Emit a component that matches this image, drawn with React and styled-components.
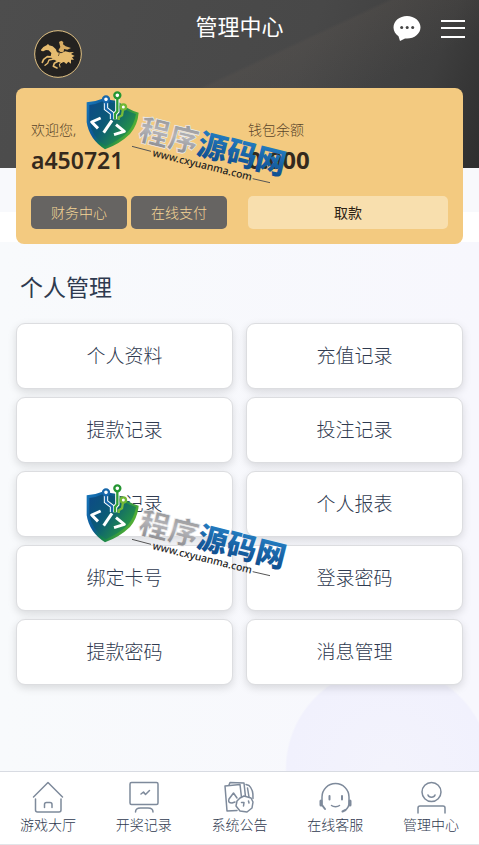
import styled, { createGlobalStyle } from 'styled-components';

// the two columns of shortcuts under the wallet card
const tiles = [
  '个人资料', '充值记录',
  '提款记录', '投注记录',
  '账变记录', '个人报表',
  '绑定卡号', '登录密码',
  '提款密码', '消息管理',
];

const tabs = [
  { label: '游戏大厅', icon: <HomeIcon /> },
  { label: '开奖记录', icon: <BoardIcon /> },
  { label: '系统公告', icon: <CardsIcon /> },
  { label: '在线客服', icon: <ServiceIcon /> },
  { label: '管理中心', icon: <UserIcon /> },
];

function App() {
  return (
    <Page>
      <GlobalStyle />
      <Header>
        <Logo href="#" aria-label="首页"><RiderLogo /></Logo>
        <Title>管理中心</Title>
        <HeaderActions>
          <IconButton aria-label="消息"><ChatIcon /></IconButton>
          <IconButton aria-label="菜单"><MenuIcon /></IconButton>
        </HeaderActions>
      </Header>

      <Main>
        <Band>
          <Wallet>
            <div>
              <Label>欢迎您,</Label>
              <Amount>a450721</Amount>
              <Buttons>
                <DarkButton>财务中心</DarkButton>
                <DarkButton>在线支付</DarkButton>
              </Buttons>
            </div>
            <div>
              <Label>钱包余额</Label>
              <Amount $bold>0.000</Amount>
              <Buttons>
                <LightButton>取款</LightButton>
              </Buttons>
            </div>
          </Wallet>
        </Band>
        <Heading>个人管理</Heading>
        <Tiles>
          {tiles.map((name) => (
            <Tile key={name} href="#">{name}</Tile>
          ))}
        </Tiles>
      </Main>

      <TabBar>
        {tabs.map((tab) => (
          <Tab key={tab.label} href="#">
            {tab.icon}
            {tab.label}
          </Tab>
        ))}
      </TabBar>

      <Watermark $top={85} id="a" />
      <Watermark $top={478} id="b" />
    </Page>
  );
}

function RiderLogo() {
  return (
    <svg width="48" height="48" viewBox="18 16 144 144">
      <circle cx="90" cy="88" r="70" fill="#242220" stroke="#e3c384" strokeWidth="3" />
      {/* horse */}
      <path d="M39 75 L46 67 L57 61 L60 57 L63 62 L74 65 L83 73 L88 82 L99 86 L112 80 L124 83 L138 82 L129 88 L140 94 L132 98 L138 105 L129 105 L129 117 L121 111 L115 118 L108 112 L97 114 L84 108 L74 103 L68 95 L70 85 L62 77 L54 76 L46 80 L40 79 Z" fill="#e6bc70" />
      {/* rider */}
      <path d="M93 52 L100 48 L106 52 L105 59 L113 65 L129 70 L118 75 L108 73 L107 81 L98 83 L91 77 L97 67 Z" fill="#d9ad63" />
      <g fill="none" stroke="#e6bc70" strokeLinecap="round" strokeLinejoin="round">
        <path d="M75 97 L58 96 L47 104 L43 113" strokeWidth="5" />
        <path d="M77 103 L63 106 L59 116 L51 122" strokeWidth="4" />
        <path d="M93 108 L79 116 L76 125 L87 130" strokeWidth="5" />
        <path d="M104 111 L94 118 L96 127" strokeWidth="3" />
      </g>
      <path d="M85 72 L88 82 L94 86 L91 94" fill="none" stroke="#3a3023" strokeWidth="2" />
    </svg>
  );
}

function ChatIcon() {
  return (
    <svg width="28" height="28" viewBox="0 0 28 28">
      <path d="M14 2C6.500 2 .5 7 .5 13.500c0 3.600 2 6.700 5 8.800L7 27l5-2.500c.7.1 1.300.1 2 .1 7.500 0 13.500-5 13.500-11.300S21.500 2 14 2z" fill="#fff" />
      <circle cx="8.700" cy="13.500" r="1.500" fill="#444" />
      <circle cx="14.200" cy="13.500" r="1.500" fill="#444" />
      <circle cx="19.700" cy="13.500" r="1.500" fill="#444" />
    </svg>
  );
}

function MenuIcon() {
  return (
    <svg width="24" height="28" viewBox="0 0 24 28" stroke="#fff" strokeWidth="2">
      <path d="M0 7h24M0 14h24M0 23h24" />
    </svg>
  );
}

function HomeIcon() {
  return (
    <LineSvg viewBox="0 0 34 34">
      <path d="M2.500 17 L17 2.500 L31.500 17" />
      <path d="M4.500 19v11q0 2 2 2h21.500q2 0 2-2V19" />
      <path d="M13.500 27.500v-3q0-2 2-2h3.500q2 0 2 2v3" />
    </LineSvg>
  );
}

function BoardIcon() {
  return (
    <LineSvg viewBox="0 0 34 34">
      <rect x="3" y="2.500" width="28" height="22" rx="1.500" />
      <path d="M14 14l2.500-2 2 2.500 4-4" />
      <path d="M8.500 32c0-3 2-4 5-4h7.500c3 0 5 1 5 4" />
    </LineSvg>
  );
}

function CardsIcon() {
  return (
    <LineSvg viewBox="0 0 34 34">
      <path d="M15 30.500L5 31 3 6l15-1.500 1.500 13" />
      <path d="M7 5l1-2.500 14 .5 1.500 14" />
      <path d="M24 4.500l3 1q4.500 4 4 13M25.500 8l1.500 9" />
      <path d="M15 18l-3.500-5-4.500 6q-1.500 4 3 4l3-1" />
      <path d="M18 18l4-2 7 2 2 4-1 6-5 4-7-1-4-5 1-5z" fill="#fff" />
      <path d="M19.500 22.500h2.500l-.5 3.500M26.500 21l.5 2" />
    </LineSvg>
  );
}

function ServiceIcon() {
  return (
    <LineSvg viewBox="0 0 34 34">
      <path d="M4 24v-7a13.500 13.500 0 0 1 27 0v6c0 3-1 5-3.500 7" />
      <path d="M3 21v4M32 21v4" strokeWidth="3" />
      <path d="M11.500 16v3.500M24 16v3.500" strokeWidth="2" />
      <path d="M13.500 25.500c2 1.500 6 1.500 8 0" />
      <path d="M4 25l3 4M27.500 30l-3 1.500" strokeWidth="2" />
    </LineSvg>
  );
}

function UserIcon() {
  return (
    <LineSvg viewBox="0 0 34 34">
      <circle cx="17.500" cy="12" r="9.500" />
      <path d="M14 15c1 3 6 3 7 0" />
      <path d="M4 33v-5q0-2 2-2h23q2 0 2 2v5" />
    </LineSvg>
  );
}

// shield, site name and address, tilted over the page
function Watermark({ $top, id }) {
  return (
    <Mark $top={$top} viewBox="0 0 690 330" aria-hidden="true">
      <defs>
        <linearGradient id={`shield-${id}`} x1="0" y1="0" x2="1" y2="0.5">
          <stop offset="0" stopColor="#1878bd" />
          <stop offset="0.400" stopColor="#0b5794" />
          <stop offset="0.600" stopColor="#12804f" />
          <stop offset="1" stopColor="#5bb530" />
        </linearGradient>
        <linearGradient id={`inner-${id}`} x1="0" y1="0" x2="1" y2="0.700">
          <stop offset="0" stopColor="#0d4a87" />
          <stop offset="0.450" stopColor="#0b5a76" />
          <stop offset="1" stopColor="#2ba03c" />
        </linearGradient>
        <linearGradient id={`silver-${id}`} x1="0" y1="0" x2="0" y2="1">
          <stop offset="0" stopColor="#858585" />
          <stop offset="0.500" stopColor="#b4b4b8" />
          <stop offset="1" stopColor="#808084" />
        </linearGradient>
        <linearGradient id={`blue-${id}`} x1="0" y1="0" x2="0" y2="1">
          <stop offset="0" stopColor="#2a8bd0" />
          <stop offset="1" stopColor="#0b4484" />
        </linearGradient>
      </defs>
      <path d="M50 52Q76 50 97 41L142 48Q174 75 206 83Q203 120 180 147Q149 177 105 193Q58 163 50 112Z" fill={`url(#shield-${id})`} />
      <path d="M58 60Q80 58 98 49L142 56Q168 79 198 87Q193 118 173 142Q145 168 107 184Q65 156 58 108Z" fill={`url(#inner-${id})`} />
      <g fill="none" strokeWidth="7">
        <path d="M108 53v18l18 14v17" stroke="#fff" strokeWidth="13" />
        <path d="M142 41v38l-7 8v16" stroke="#fff" strokeWidth="13" />
        <path d="M108 53v18l18 14v17" stroke="#1767aa" />
        <path d="M142 41v38l-7 8v16" stroke="#309f37" />
        <path d="M159 74l-3 17-10 6v8" stroke="#78bc39" />
        <circle cx="108" cy="43" r="9" stroke="#1767aa" fill="#fff" />
        <circle cx="142" cy="31" r="9" stroke="#249532" fill="#fff" />
        <circle cx="160" cy="66" r="8" stroke="#72b735" fill="#fff" />
      </g>
      <g fill="none" stroke="#fff" strokeWidth="9" strokeLinejoin="round">
        <path d="M92 99L65 111L84 130" />
        <path d="M126 106L101 143" />
        <path d="M138 119L163 139L132 149" />
      </g>
      <g transform="translate(202 163) rotate(14)">
        <MarkName fill={`url(#silver-${id})`} stroke="#eee" strokeWidth="2">
          程序<tspan fill={`url(#blue-${id})`} stroke="none">源码网</tspan>
        </MarkName>
      </g>
      <g transform="translate(246 213) rotate(14)">
        <MarkUrl>www.cxyuanma.com</MarkUrl>
      </g>
      <path d="M186 184L243 199M548 281L600 293" stroke="#555" strokeWidth="3" />
    </Mark>
  );
}

const GlobalStyle = createGlobalStyle`
  * {
    box-sizing: border-box;
  }
  body {
    margin: 0;
    font-family: "Noto Sans", "Noto Sans CJK SC", sans-serif;
    font-weight: 300;
    color: #2f3a4f;
  }
  a {
    color: inherit;
    text-decoration: none;
  }
  button {
    border: none;
    font: inherit;
    cursor: pointer;
  }
`;

const Page = styled.div`
  position: relative;
  display: flex;
  flex-direction: column;
  min-height: 100vh;
  overflow: hidden;
  background: #f8f9fc;
`;

const Header = styled.header`
  display: grid;
  grid-template-columns: 1fr auto 1fr;
  align-items: start;
  padding: 11px 14px 90px;
  background:
    linear-gradient(155deg, transparent 46%, rgba(110, 98, 88, 0.16) 47%, transparent 66%),
    linear-gradient(110deg, #4d4d4d 0%, #484848 60%, #3e3e3e 85%, #2e2e2e 100%);
`;

const Logo = styled.a`
  display: flex;
  justify-self: start;
  margin: 19px 0 0 20px;
`;

const Title = styled.h1`
  margin: 0;
  color: #fff;
  font-size: 22px;
  font-weight: 400;
  line-height: 30px;
`;

const HeaderActions = styled.div`
  display: flex;
  justify-self: end;
  gap: 20px;
`;

const IconButton = styled.button`
  display: flex;
  padding: 3px 0 0;
  background: none;
`;

const Main = styled.main`
  flex: 1;
  padding-bottom: 32px;
  background:
    radial-gradient(circle at 81% calc(100% - 2px), #f3f3fc 0, #f1f1fd 101px, transparent 103px),
    linear-gradient(90deg, #f8fafc 0%, #f7f7fd 100%);
`;

// white strip that runs behind the lower part of the card
const Band = styled.div`
  padding: 0 16px;
  background: linear-gradient(#f8f9fc 44px, #fff 44px, #fff 74px, transparent 74px);
`;

const Wallet = styled.section`
  position: relative;
  top: -80px;
  display: grid;
  grid-template-columns: 49fr 50fr;
  column-gap: 21px;
  margin-bottom: -80px;
  padding: 30px 15px 15px;
  border-radius: 8px;
  background: #f3ca80;
`;

const Label = styled.p`
  margin: 0;
  color: #5a452a;
  font-size: 14px;
  line-height: 24px;
`;

const Amount = styled.p`
  margin: 0 0 18px;
  color: #33291d;
  font-family: "Noto Sans", sans-serif;
  font-size: ${(props) => (props.$bold ? 24 : 23)}px;
  font-weight: ${(props) => (props.$bold ? 700 : 600)};
  line-height: 36px;
`;

const Buttons = styled.div`
  display: flex;
  gap: 4px;
`;

const DarkButton = styled.button`
  flex: 1;
  padding: 0;
  border-radius: 5px;
  background: #666462;
  color: #f5d596;
  font-size: 14px;
  line-height: 33px;
`;

const LightButton = styled(DarkButton)`
  background: #f8dfae;
  color: #2c2213;
  font-weight: 400;
`;

const Heading = styled.h2`
  margin: 26px 20px 19px;
  font-size: 23px;
  font-weight: 400;
  line-height: 34px;
`;

const Tiles = styled.nav`
  display: grid;
  grid-template-columns: 1fr 1fr;
  gap: 8px 13px;
  padding: 0 16px;
`;

const Tile = styled.a`
  height: 66px;
  border: 1px solid #dcdde0;
  border-radius: 9px;
  background: #fff;
  box-shadow: 0 3px 8px rgba(0, 0, 0, 0.13);
  font-size: 19px;
  line-height: 65px;
  text-align: center;
`;

const TabBar = styled.nav`
  display: grid;
  grid-template-columns: repeat(5, 1fr);
  height: 74px;
  padding-top: 8px;
  border-top: 1px solid #d8dbe2;
  border-bottom: 1px solid #e2e4e8;
  background: #fff;
`;

const Tab = styled.a`
  display: flex;
  flex-direction: column;
  align-items: center;
  font-size: 14px;
  line-height: 22px;
`;

const LineSvg = styled.svg`
  width: 34px;
  height: 34px;
  fill: none;
  stroke: #7e8a9b;
  stroke-width: 1.5;
  stroke-linecap: round;
  stroke-linejoin: round;
`;

const Mark = styled.svg`
  position: absolute;
  top: ${(props) => props.$top}px;
  left: 70px;
  width: 230px;
  height: 110px;
  pointer-events: none;
`;

const MarkName = styled.text`
  font-family: "Noto Sans CJK SC", sans-serif;
  font-size: 90px;
  font-weight: 900;
`;

const MarkUrl = styled.text`
  fill: #222;
  font-family: "Noto Sans", sans-serif;
  font-size: 31px;
  font-weight: 500;
`;

export default App;
